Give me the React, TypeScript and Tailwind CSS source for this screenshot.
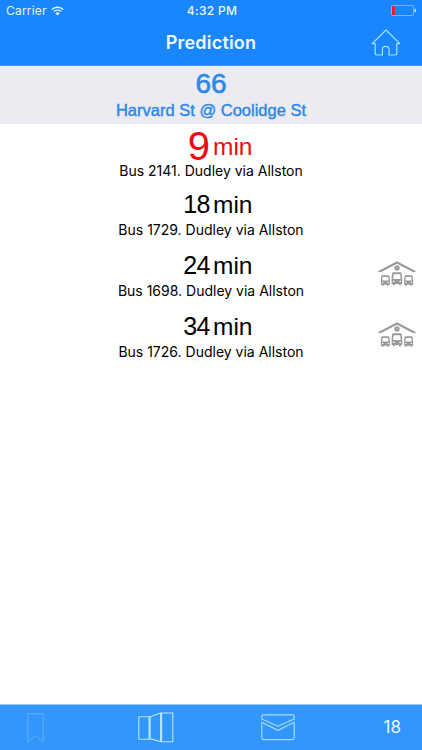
import clsx from 'clsx';

interface Prediction {
  minutes: number;
  vehicle: string;
  direction: string;
  atTerminal: boolean;
}

const predictions: Prediction[] = [
  { minutes: 9, vehicle: '2141', direction: 'Dudley via Allston', atTerminal: false },
  { minutes: 18, vehicle: '1729', direction: 'Dudley via Allston', atTerminal: false },
  { minutes: 24, vehicle: '1698', direction: 'Dudley via Allston', atTerminal: true },
  { minutes: 34, vehicle: '1726', direction: 'Dudley via Allston', atTerminal: true },
];

const WifiIcon = () => (
  <svg width="13" height="10" viewBox="0 0 13 10" fill="none" stroke="#e8f6ff">
    <path d="M.8 3.5a8.2 8.2 0 0 1 11.4 0" strokeWidth="1.4" />
    <path d="M2.8 5.6a5.3 5.3 0 0 1 7.4 0" strokeWidth="1.4" />
    <path d="M6.5 9.4 4.4 7.2a3 3 0 0 1 4.2 0z" fill="#e8f6ff" stroke="none" />
  </svg>
);

const BatteryIcon = () => (
  <svg width="25" height="11" viewBox="0 0 25 11" fill="none">
    <rect x=".5" y=".5" width="22" height="10" rx="1.5" stroke="#6fb4f5" />
    <rect x="1" y="1" width="3" height="9" fill="#e5202f" />
    <path d="M23.5 3.8h.6q.7 0 .7.7v2q0 .7-.7.7h-.6z" fill="#d5efff" />
  </svg>
);

const HomeIcon = () => (
  <svg width="30" height="28" viewBox="0 0 30 28" fill="none" stroke="#a9e0ff" strokeWidth="1.2" strokeLinejoin="round">
    <path d="M15 1 1.2 14.6h3v9.6q0 1.8 1.8 1.8h5.4v-5.6q0-3 3.3-3t3.3 3V26H24q1.8 0 1.8-1.8v-9.6h3z" />
  </svg>
);

const Bus = () => (
  <path
    fillRule="evenodd"
    d="M1.6 0h5.8q1 0 1.2 1l.4 3.6v5H7.9v.9H6.3v-.9H2.7v.9H1.1v-.9H0v-5L.4 1Q.6 0 1.6 0zM1.7 1.7l-.4 3.7h6.4l-.4-3.7zM1.1 6.9v1h1.3v-1zM6.6 6.9v1h1.3v-1z"
  />
);

const TerminalIcon = () => (
  <svg width="38" height="25" viewBox="0 0 38 25" fill="#999">
    <path d="M19 .2 37.6 10v1.1h-2.7L19 2.7 3.1 11.1H.4V10z" />
    <circle cx="19" cy="6.9" r="2.7" />
    <path d="M19 5.7V7.2h1" fill="none" stroke="#ddd" strokeWidth=".6" />
    <g transform="translate(2.9 14.2)"><Bus /></g>
    <g transform="translate(13.6 11.2) scale(1.18 1.24)"><Bus /></g>
    <g transform="translate(26.1 14.2)"><Bus /></g>
  </svg>
);

const BookmarkIcon = () => (
  <svg width="17" height="30" viewBox="0 0 17 30" fill="none" stroke="#64b3ff">
    <path d="M.8.8h15.4v28L8.5 22.6.8 28.8z" />
  </svg>
);

const MapIcon = () => (
  <svg width="36" height="31" viewBox="0 0 36 31" fill="none" stroke="#b9e6ff" strokeWidth="1.1">
    <path d="M.8 4.7H11v22.5H.8zM12.2 4.7 22.6 1v28.6l-10.4-2.8zM23.6 1h11.2v28.8H23.6z" />
  </svg>
);

const MailIcon = () => (
  <svg width="34" height="27" viewBox="0 0 34 27" fill="none" stroke="#a4dcff" strokeWidth="1.2" strokeLinejoin="round">
    <path d="M.8 5V2.6Q.8.8 2.6.8h28.8q1.8 0 1.8 1.8V5L17 12.3z" />
    <path d="M.8 8.2 17 16.4l16.2-8.2v15.6q0 1.8-1.8 1.8H2.6q-1.8 0-1.8-1.8z" />
  </svg>
);

const StatusBar = () => (
  <div className="grid h-[22px] grid-cols-3 items-center pr-[6px] pl-[6px] text-[12px] text-[#e8f6ff]">
    <div className="flex items-center gap-[4px] tracking-[0.2px]">
      Carrier
      <WifiIcon />
    </div>
    <div className="pl-[2px] text-center font-medium tracking-[0.3px]">4:32 PM</div>
    <div className="flex justify-end pb-px">
      <BatteryIcon />
    </div>
  </div>
);

const PredictionRow = ({ prediction }: { prediction: Prediction }) => {
  const arriving = prediction.minutes < 10;

  return (
    <li className="grid h-[61px] grid-cols-[1fr_50px] first:h-[60px]">
      <div>
        <div
          className={clsx(
            'grid grid-cols-[210px_1fr] gap-[3px] font-["Liberation_Sans",sans-serif]',
            arriving ? 'h-[38px] text-[#ee0a0f]' : 'h-[37px] text-black',
          )}
        >
          <span
            className={clsx(
              'text-right',
              arriving ? 'text-[40px] leading-[44px]' : 'text-[25px] leading-[41px] tracking-[-0.5px]',
            )}
          >
            {prediction.minutes}
          </span>
          <span className={clsx('text-left text-[24.5px]', arriving ? 'leading-[45px]' : 'leading-[41px]')}>min</span>
        </div>
        <p className="pl-[50px] text-center text-[14px] leading-[17px] whitespace-nowrap text-black">
          Bus {prediction.vehicle}. {prediction.direction}
        </p>
      </div>
      {prediction.atTerminal && (
        <div className="flex justify-center pt-[16px]">
          <TerminalIcon />
        </div>
      )}
    </li>
  );
};

const App = () => {
  return (
    <div className="flex h-[750px] w-[422px] flex-col overflow-hidden bg-white font-[Inter,sans-serif]">
      <header className="h-[66px] border-b border-[#4a97ec] bg-[#1a86fd]">
        <StatusBar />
        <div className="grid h-[41px] grid-cols-[1fr_auto_1fr] items-center">
          <h1 className="col-start-2 text-[18px] font-semibold tracking-[0.2px] text-[#eefaff]">Prediction</h1>
          <button className="justify-self-end pr-[21px]" aria-label="Home">
            <HomeIcon />
          </button>
        </div>
      </header>

      {/* Route and stop */}
      <section className='h-[58px] bg-[#ebebf1] text-center font-["Liberation_Sans",sans-serif] text-[#2a87ea]'>
        <div className="h-[36px] text-[28px] leading-[35px] [-webkit-text-stroke:0.6px_#2a87ea]">66</div>
        <div className="text-[16.5px] leading-[17px] [-webkit-text-stroke:0.4px_#2a87ea]">Harvard St @ Coolidge St</div>
      </section>

      {/* Predictions */}
      <ul className="flex-1">
        {predictions.map((prediction) => (
          <PredictionRow key={prediction.vehicle} prediction={prediction} />
        ))}
      </ul>

      {/* Toolbar */}
      <footer className="flex h-[46px] items-center border-t border-[#9acbfb] bg-[#3296fa] pr-[21px] pl-[27px]">
        <button aria-label="Bookmark">
          <BookmarkIcon />
        </button>
        <button className="ml-[94px]" aria-label="Map">
          <MapIcon />
        </button>
        <button className="ml-[87px]" aria-label="Message">
          <MailIcon />
        </button>
        <span className="ml-auto text-[17px] text-[#e6f6ff]">18</span>
      </footer>
    </div>
  );
};

export default App;
